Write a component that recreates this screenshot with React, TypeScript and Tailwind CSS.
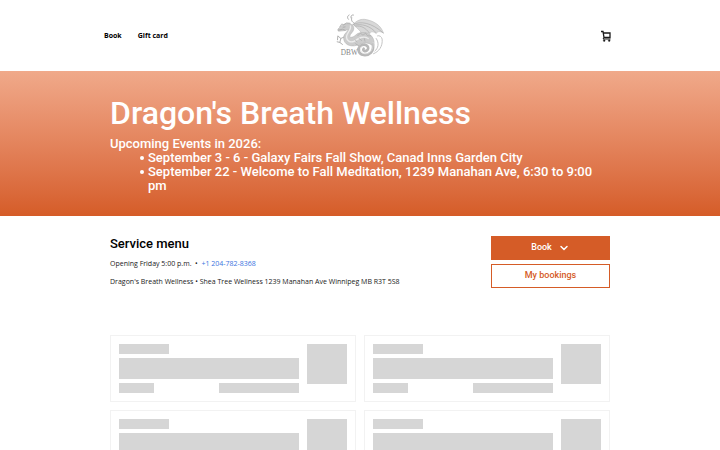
import { ChevronDown } from "lucide-react";

const events = [
  "September 3 - 6 - Galaxy Fairs Fall Show, Canad Inns Garden City",
  "September 22 - Welcome to Fall Meditation, 1239 Manahan Ave, 6:30 to 9:00 pm",
];

function DragonLogo() {
  return (
    <svg viewBox="0 0 150 130" className="h-[43px] w-[50px]" fill="none" stroke="#a8a8a8" strokeWidth="3" strokeLinecap="round" strokeLinejoin="round" role="img" aria-label="Dragon's Breath Wellness">
      {/* wing */}
      <path d="M54 32 C66 18 80 14 94 17 C118 22 138 34 146 58 C136 51 128 52 124 59 C116 52 106 52 104 60 C96 54 88 54 84 64 C78 52 68 44 54 32Z" fill="#d8d8d8" stroke="#c0c0c0" strokeWidth="2" />
      <path d="M54 32 C76 20 110 26 145 57 M58 34 C80 28 106 36 123 56 M62 37 C78 34 92 42 103 57" stroke="#aaaaaa" strokeWidth="2" />
      <path d="M58 28 C50 24 48 18 50 12 M40 16 C36 12 36 6 42 3 M48 12 C46 6 50 2 55 3" strokeWidth="3" />
      {/* body */}
      <path d="M30 30 C46 26 58 34 56 46 C54 56 44 60 44 68 C48 74 58 68 64 62 C74 54 92 54 104 62 C116 70 120 84 116 98 C108 90 98 86 86 88 C72 92 62 98 48 96 C32 94 24 82 26 68 C28 58 38 54 40 46 L30 50 L10 52 L8 46 L18 36Z" fill="#cccccc" stroke="#b8b8b8" strokeWidth="2" />
      <path d="M46 36 C50 46 34 58 34 70 C35 82 46 88 58 82 C70 74 84 64 100 74" stroke="#ececec" strokeWidth="4" />
      <path d="M9 49 L22 46 L30 49 M14 38 L20 30 L26 33 L34 27 L45 28 M24 40 L30 39" stroke="#a0a0a0" strokeWidth="2" />
      {/* legs */}
      <path d="M26 70 L17 74 L14 86 L22 92 M14 86 L6 84 M17 74 L8 66 L7 78 M62 90 L74 98 L68 104" stroke="#b0b0b0" />
      {/* curled tail */}
      <path d="M114 92 C118 114 102 126 86 124 C68 121 66 100 80 94 C94 88 106 102 96 110 C90 115 82 110 86 105" stroke="#b8b8b8" strokeWidth="8" />
      <path d="M115 86 C116 112 102 123 87 120 C74 116 74 102 82 98" stroke="#e0e0e0" strokeWidth="2" />
      <path d="M116 120 C132 114 144 98 142 76 C140 68 134 64 128 66 M124 74 C134 88 130 104 120 112" stroke="#c4c4c4" strokeWidth="3" />
      <path d="M68 66 L76 58 L84 64 L92 58 L98 66 L108 66 M60 78 L66 84 M72 74 L80 80 M88 74 L90 82" stroke="#a8a8a8" strokeWidth="2" />
      <text x="17" y="123" fontFamily="Liberation Serif, serif" fontSize="22" fill="#858585" stroke="none">DBW</text>
    </svg>
  );
}

function CartIcon() {
  return (
    <svg viewBox="0 0 12 12" className="h-3 w-3" fill="none" stroke="#1a1a1a" strokeWidth="1.3">
      <path d="M1 1.5 H3 L4 7.5 H10 V3 H3.2" />
      <path d="M4 7.5 L3 9 H10.5" strokeWidth="1" />
      <circle cx="4.2" cy="10.6" r="0.9" fill="#1a1a1a" strokeWidth="0.4" />
      <circle cx="9.2" cy="10.6" r="0.9" fill="#1a1a1a" strokeWidth="0.4" />
    </svg>
  );
}

function SkeletonCard() {
  return (
    <div className="flex gap-2 border border-[#f2f2f2] p-2">
      <div className="flex-1 space-y-1">
        <div className="h-[10px] w-[50px] bg-[#d6d6d6]" />
        <div className="h-[21px] bg-[#d6d6d6]" />
        <div className="flex justify-between">
          <div className="h-[10px] w-[35px] bg-[#d6d6d6]" />
          <div className="h-[10px] w-20 bg-[#d6d6d6]" />
        </div>
      </div>
      <div className="h-10 w-10 bg-[#d6d6d6]" />
    </div>
  );
}

export default function App() {
  return (
    <div className="h-screen overflow-hidden bg-white font-['Roboto',sans-serif] text-[#1a1a1a]">
      <header className="mx-auto grid h-[71px] max-w-[512px] grid-cols-3 items-center">
        <nav className="flex gap-4 font-['Open_Sans',sans-serif] text-[7px] leading-3 font-bold text-black">
          <a href="#book">Book</a>
          <a href="#gift-card">Gift card</a>
        </nav>
        <a href="#home" className="justify-self-center">
          <DragonLogo />
        </a>
        <button type="button" aria-label="Cart" className="justify-self-end pr-1">
          <CartIcon />
        </button>
      </header>

      <section className="bg-linear-to-b from-[#f0a98a] to-[#d55c27] pt-6 pb-[23px] text-white">
        <div className="mx-auto max-w-[500px]">
          <h1 className="text-[32px] leading-9 font-medium">Dragon's Breath Wellness</h1>
          <div className="mt-[6px] text-[13px] leading-[14px] font-medium">
            <p>Upcoming Events in 2026:</p>
            <ul className="pr-3 pl-[30px]">
              {events.map((event) => (
                <li key={event} className="flex gap-1">
                  <span className="mt-[5px] h-1 w-1 shrink-0 rounded-full bg-white" />
                  <span>{event}</span>
                </li>
              ))}
            </ul>
          </div>
        </div>
      </section>

      <main className="mx-auto max-w-[500px] pt-5">
        <div className="flex items-start justify-between">
          <div className="font-['Open_Sans',sans-serif] text-[7px] leading-3">
            <h2 className="font-['Roboto',sans-serif] text-[13px] leading-4 font-medium text-black">Service menu</h2>
            <p className="mt-[6px]">
              Opening Friday 5:00 p.m. &nbsp;•&nbsp;{" "}
              <a href="tel:+12047828368" className="text-[#3b74e0]">+1 204-782-8368</a>
            </p>
            <p className="mt-[6px]">Dragon's Breath Wellness • Shea Tree Wellness 1239 Manahan Ave Winnipeg MB R3T 5S8</p>
          </div>
          <div className="flex w-[119px] flex-col gap-1 text-[9px] font-medium">
            <button type="button" className="flex h-6 items-center justify-center gap-[6px] bg-[#d55c27] text-white">
              Book
              <ChevronDown size={12} strokeWidth={3} />
            </button>
            <button type="button" className="h-6 border border-[#d55c27] text-[#d55c27]">My bookings</button>
          </div>
        </div>

        <div className="mt-[47px] grid grid-cols-2 gap-2">
          {[1, 2, 3, 4].map((n) => (
            <SkeletonCard key={n} />
          ))}
        </div>
      </main>
    </div>
  );
}
